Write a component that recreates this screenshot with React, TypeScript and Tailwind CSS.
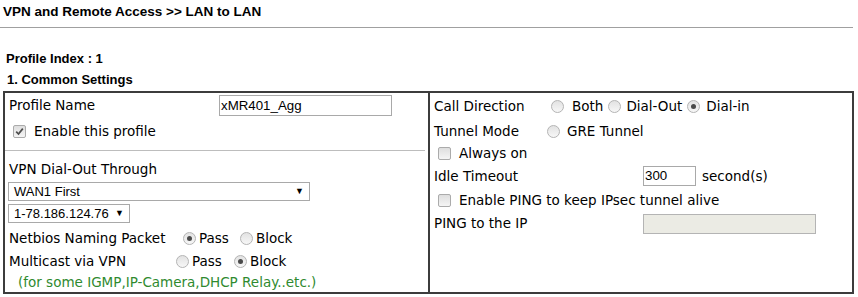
import React from "react"

const verdana = { fontFamily: '"DejaVu Sans", Verdana, sans-serif' }
const arial = { fontFamily: '"Liberation Sans", Arial, sans-serif' }

function Radio({ checked = false }: { checked?: boolean }) {
  return (
    <span className="inline-flex h-[13px] w-[13px] shrink-0 items-center justify-center rounded-full border border-[#b4b4b4] bg-gradient-to-b from-[#e2e2e2] to-[#f7f7f7]">
      {checked && <span className="h-[5px] w-[5px] rounded-full bg-[#4a4a4a]" />}
    </span>
  )
}

function Check({ checked = false }: { checked?: boolean }) {
  return (
    <span className="inline-flex h-[13px] w-[13px] shrink-0 items-center justify-center rounded-[2px] border border-[#ababab] bg-gradient-to-b from-[#dedede] to-[#f5f5f5]">
      {checked && (
        <svg width="9" height="9" viewBox="0 0 9 9">
          <path d="M1.2 4.6 L3.5 7 L7.8 1.6" fill="none" stroke="#4d4d4d" strokeWidth="1.7" />
        </svg>
      )}
    </span>
  )
}

function Select({ value, width }: { value: string; width: string }) {
  return (
    <div
      className={`flex h-[19px] items-center justify-between border border-[#a9a9a9] bg-white pl-[5px] pr-[5px] text-[13px] text-black ${width}`}
      style={arial}
    >
      <span>{value}</span>
      <span className="ml-[4px] text-[9px]">▼</span>
    </div>
  )
}

export default function App() {
  return (
    <div className="h-[297px] w-[858px] overflow-hidden bg-white text-black">
      <div className="flex h-[24px] items-center pl-[3px] text-[13.5px] font-bold" style={arial}>
        VPN and Remote Access &gt;&gt; LAN to LAN
      </div>
      <div className="mt-[3px] w-[853px] border-t border-[#a0a0a0]" />

      <div className="mt-[20px] flex h-[22px] items-center pl-[6px] text-[13px] font-bold" style={arial}>
        Profile Index : 1
      </div>
      <div className="flex h-[19px] items-center pl-[7px] text-[13px] font-bold" style={arial}>
        1. Common Settings
      </div>

      <div className="ml-[3px] mt-[2px] flex h-[203px] w-[851px] border-2 border-[#3c3c3c] text-[13.5px]" style={verdana}>
        {/* left cell */}
        <div className="flex w-[425px] flex-col border-r-2 border-[#3c3c3c]">
          <div className="flex h-[25px] items-center pl-[4px]">
            <span className="w-[210px]">Profile Name</span>
            <div className="flex h-[21px] w-[173px] items-center border border-[#a9a9a9] pl-[1px] text-[13.3px]" style={arial}>
              xMR401_Agg
            </div>
          </div>
          <div className="flex h-[27px] items-center pl-[8px]">
            <Check checked />
            <span className="ml-[8px]">Enable this profile</span>
          </div>
          <div className="mr-[3px] mt-[5px] border-t border-[#bdbdbd]" />
          <div className="mt-[6px] flex h-[24px] items-center pl-[4px]">VPN Dial-Out Through</div>
          <div className="mt-[1px] pl-[3px]">
            <Select value="WAN1 First" width="w-[302px]" />
          </div>
          <div className="mt-[3px] pl-[3px]">
            <Select value="1-78.186.124.76" width="w-[122px]" />
          </div>
          <div className="mt-[3px] flex h-[24px] items-center pl-[4px]">
            <span className="w-[174px]">Netbios Naming Packet</span>
            <Radio checked />
            <span className="ml-[3px]">Pass</span>
            <span className="ml-[11px]" />
            <Radio />
            <span className="ml-[3px]">Block</span>
          </div>
          <div className="flex h-[23px] items-center pl-[4px]">
            <span className="w-[167px]">Multicast via VPN</span>
            <Radio />
            <span className="ml-[3px]">Pass</span>
            <span className="ml-[12px]" />
            <Radio checked />
            <span className="ml-[3px]">Block</span>
          </div>
          <div className="flex h-[18px] items-center pl-[13px] text-[#2f8a2f]">
            (for some IGMP,IP-Camera,DHCP Relay..etc.)
          </div>
        </div>

        {/* right cell */}
        <div className="flex flex-1 flex-col">
          <div className="flex h-[26px] items-center pl-[4px]">
            <span className="w-[117px]">Call Direction</span>
            <Radio />
            <span className="ml-[8px]">Both</span>
            <span className="ml-[5px]" />
            <Radio />
            <span className="ml-[5px]">Dial-Out</span>
            <span className="ml-[5px]" />
            <Radio checked />
            <span className="ml-[6px]">Dial-in</span>
          </div>
          <div className="flex h-[24px] items-center pl-[4px]">
            <span className="w-[113px]">Tunnel Mode</span>
            <Radio />
            <span className="ml-[7px]">GRE Tunnel</span>
          </div>
          <div className="flex h-[21px] items-center pl-[8px]">
            <Check />
            <span className="ml-[8px]">Always on</span>
          </div>
          <div className="flex h-[24px] items-center pl-[4px]">
            <span className="w-[209px]">Idle Timeout</span>
            <div className="flex h-[20px] w-[53px] items-center border border-[#a9a9a9] pl-[1px] text-[13.3px]" style={arial}>
              300
            </div>
            <span className="ml-[6px]">second(s)</span>
          </div>
          <div className="flex h-[25px] items-center pl-[8px]">
            <Check />
            <span className="ml-[8px]">Enable PING to keep IPsec tunnel alive</span>
          </div>
          <div className="flex h-[21px] items-center pl-[4px]">
            <span className="w-[209px]">PING to the IP</span>
            <div className="h-[20px] w-[173px] border border-[#b4b4b4] bg-[#ebebe4]" />
          </div>
        </div>
      </div>
    </div>
  )
}
